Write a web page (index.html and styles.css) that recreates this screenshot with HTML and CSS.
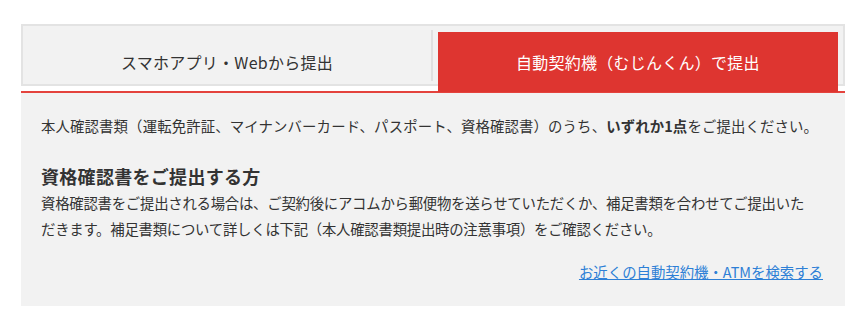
FILE: index.html
```html
<!DOCTYPE html>
<html lang="ja">
<head>
<meta charset="utf-8">
<title>本人確認書類の提出</title>
<link rel="stylesheet" href="styles.css">
</head>
<body>
<div class="wrap">
  <div class="tabs">
    <div class="tab tab-off"><span>スマホアプリ・Webから提出</span></div>
    <div class="tab tab-on"><span>自動契約機（むじんくん）で提出</span></div>
  </div>
  <div class="panel">
    <p class="lead">本人確認書類（運転免許証、マイナンバーカード、パスポート、資格確認書）のうち、<strong>いずれか1点</strong>をご提出ください。</p>
    <h3 class="heading">資格確認書をご提出する方</h3>
    <p class="body">資格確認書をご提出される場合は、ご契約後にアコムから郵便物を送らせていただくか、補足書類を合わせてご提出いただきます。補足書類について詳しくは下記（本人確認書類提出時の注意事項）をご確認ください。</p>
    <div class="linkrow"><a class="link" href="#">お近くの自動契約機・ATMを検索する</a></div>
  </div>
</div>
</body>
</html>
```

FILE: styles.css
```css
html, body {
  margin: 0;
  padding: 0;
  background: #ffffff;
}
body {
  font-family: "Noto Sans CJK JP", "Noto Sans", sans-serif;
  color: #333333;
}
.wrap {
  margin: 24px 0 0 21px;
  width: 824px;
}
.tabs {
  box-sizing: border-box;
  display: flex;
  align-items: flex-start;
  height: 62px;
  border: 2px solid #e3e3e3;
  background: #f2f2f2;
  padding: 6px 5px 0 0;
}
.tab {
  box-sizing: border-box;
  display: flex;
  align-items: center;
  justify-content: center;
  font-size: 16px;
  line-height: 24px;
  letter-spacing: 0.25px;
  height: 60px;
}
.tab-off {
  width: 410px;
  margin-right: 5px;
  margin-top: -2px;
  height: 51px;
  align-items: flex-start;
  padding-top: 20px;
  border-right: 2px solid #e0e0e0;
  color: #333333;
}
.tab-on {
  width: 400px;
  background: #de3530;
  color: #ffffff;
}
.panel {
  margin-top: 5px;
  border-top: 2px solid #e4433d;
  background: #f2f2f2;
  padding: 20px 22px 21px 20px;
  font-size: 14.4px;
  line-height: 1.8;
}
.lead {
  margin: 0;
  letter-spacing: 0.13px;
}
.lead strong {
  font-weight: bold;
}
.heading {
  margin: 24px 0 0;
  font-size: 18px;
  line-height: 27px;
  font-weight: bold;
  letter-spacing: 0.3px;
}
.body {
  margin: 0;
  padding-right: 12px;
  letter-spacing: -0.25px;
}
.linkrow {
  margin-top: 17px;
  text-align: right;
}
.link {
  color: #2d7fd6;
  text-decoration: underline;
}
```
